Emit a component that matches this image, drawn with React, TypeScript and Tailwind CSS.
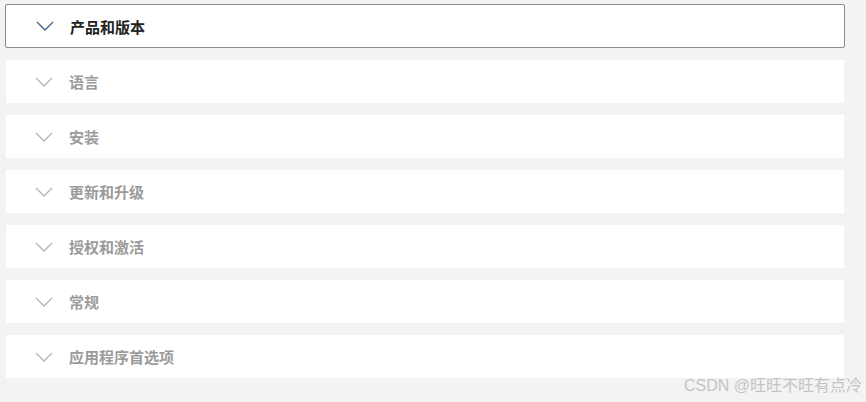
import { useState } from "react"

const sections = [
  "产品和版本",
  "语言",
  "安装",
  "更新和升级",
  "授权和激活",
  "常规",
  "应用程序首选项",
]

function Chevron({ active }: { active: boolean }) {
  return (
    <svg
      width="18"
      height="10"
      viewBox="0 0 18 10"
      fill="none"
      className={active ? "text-[#3f6287]" : "text-[#b4b4b4]"}
      aria-hidden="true"
    >
      <path d="M1 1 L9 9 L17 1" stroke="currentColor" strokeWidth="1.3" />
    </svg>
  )
}

export default function App() {
  const [open, setOpen] = useState(0)

  return (
    <div
      className="relative w-[866px] h-[402px] bg-[#f3f3f3] overflow-hidden"
      style={{ fontFamily: '"Noto Sans CJK SC", "Liberation Sans", sans-serif' }}
    >
      <div className="flex flex-col gap-[12px] pl-[5px] pr-[21px] pt-[4px]">
        {sections.map((title, i) => {
          const active = i === open
          return (
            <button
              key={title}
              type="button"
              onClick={() => setOpen(i)}
              className={
                active
                  ? "flex items-center h-[44px] bg-white border border-[#8a8a8a] rounded-[2px] text-left"
                  : "flex items-center h-[43px] mx-px bg-white text-left"
              }
            >
              <span className={active ? "pl-[30px] pr-[16px] flex" : "pl-[29px] pr-[16px] flex"}>
                <Chevron active={active} />
              </span>
              <span
                className={
                  active
                    ? "text-[15px] font-bold text-[#222222] leading-none"
                    : "text-[15px] font-bold text-[#9b9b9b] leading-none"
                }
              >
                {title}
              </span>
            </button>
          )
        })}
      </div>

      {/* watermark */}
      <div className="absolute right-[4px] bottom-[8px] text-[16px] text-[#c4c4c4] leading-none font-['Liberation_Sans','Noto_Sans_CJK_SC',sans-serif]">
        CSDN @旺旺不旺有点冷
      </div>
    </div>
  )
}
